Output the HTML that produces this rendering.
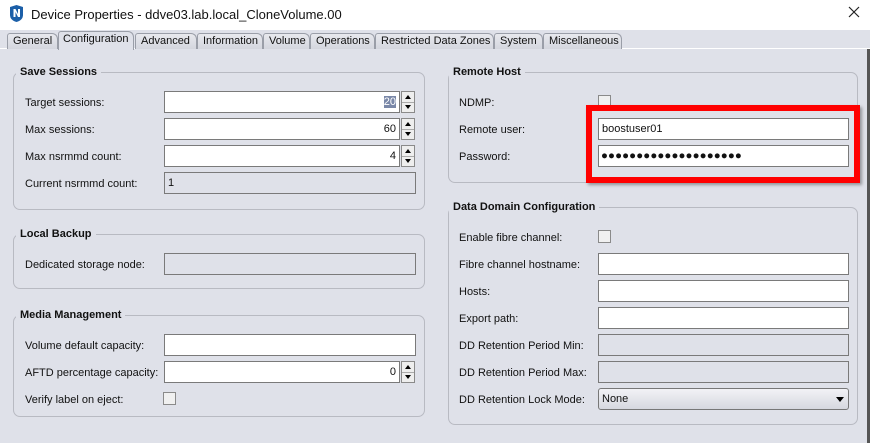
<!DOCTYPE html>
<html><head><style>
*{box-sizing:border-box;margin:0;padding:0}
body{width:870px;height:443px;overflow:hidden;background:#dfe1e9;font-family:"Liberation Sans",sans-serif;font-size:11px;color:#111;position:relative}
.a{position:absolute;white-space:nowrap}
.title{left:0;top:0;width:870px;height:30px;background:#fff}
.tabs{left:0;top:30px;width:870px;height:19px;background:#dfe1e9;border-bottom:1px solid #fff}
.tab{position:absolute;top:3px;height:16px;border:1px solid #9a9ea8;border-bottom:none;border-radius:3px 6px 0 0;background:linear-gradient(#e8e9ee,#d4d6de);font-size:11px;line-height:15px;padding-left:5px;color:#111;white-space:nowrap;overflow:hidden}
.tab.sel{top:1px;height:19px;background:#dfe1e9;border-bottom:none;z-index:2}
.grp{border:1px solid #b8bac2;border-radius:7px}
.gl{background:#dfe1e9;font-weight:bold;font-size:11px;padding:0 4px;line-height:14px}
.lbl{font-size:11px;line-height:14px}
.f{background:#fff;border:1px solid #7a7a7a;height:22px;font-size:11px;line-height:21px;padding:0 3px}
.g{background:#dfe1e9;border:1px solid #7a7a7a;height:22px;font-size:11px;line-height:21px;padding:0 3px}
.sp{width:14px;height:22px;border:1px solid #8a8a8a;background:#eee}
.sp:before{content:"";position:absolute;left:3px;top:3px;border:3.5px solid transparent;border-bottom:4px solid #000;border-top:none}
.sp:after{content:"";position:absolute;left:3px;bottom:3px;border:3.5px solid transparent;border-top:4px solid #000;border-bottom:none}
.sp i{position:absolute;left:0;top:10px;width:12px;border-top:1px solid #aaa}
.cb{width:13px;height:13px;border:1px solid #8a8a8a;background:#f0f0f0}
</style></head><body>
<div class="a title"></div>
<svg class="a" style="left:9px;top:5px" width="15" height="17" viewBox="0 0 15 17"><path d="M1 2 L7.5 0 L14 2 L14 10 Q14 15 7.5 17 Q1 15 1 10Z" fill="#1c5fa8"/><path d="M4.5 12V4h2l2.5 5V4h2v8h-2L6.5 7v5z" fill="#fff"/></svg>
<div class="a" style="left:31px;top:7px;font-size:13px;line-height:16px">Device Properties - ddve03.lab.local_CloneVolume.00</div>
<svg class="a" style="left:848px;top:6px" width="12" height="12" viewBox="0 0 12 12"><path d="M1 1L11 11M11 1L1 11" stroke="#222" stroke-width="1.2"/></svg>
<div class="a tabs">
<div class="tab" style="left:7px;width:51px">General</div>
<div class="tab sel" style="left:58px;width:76px;padding-left:4px">Configuration</div>
<div class="tab" style="left:135px;width:62px">Advanced</div>
<div class="tab" style="left:197px;width:66px">Information</div>
<div class="tab" style="left:263px;width:47px">Volume</div>
<div class="tab" style="left:310px;width:65px">Operations</div>
<div class="tab" style="left:375px;width:119px">Restricted Data Zones</div>
<div class="tab" style="left:494px;width:49px">System</div>
<div class="tab" style="left:543px;width:79px">Miscellaneous</div>
</div>
<div class="a" style="left:867px;top:49px;width:3px;height:394px;background:#555"></div>

<div class="a grp" style="left:13px;top:72px;width:412px;height:138px"></div>
<div class="a gl" style="left:16px;top:65px">Save Sessions</div>
<div class="a lbl" style="left:25px;top:96px">Target sessions:</div>
<div class="a f" style="left:164px;top:91px;width:236px;text-align:right"><span style="background:#7a88a8;color:#fff">20</span></div>
<div class="a sp" style="left:401px;top:91px"><i></i></div>
<div class="a lbl" style="left:25px;top:123px">Max sessions:</div>
<div class="a f" style="left:164px;top:118px;width:236px;text-align:right">60</div>
<div class="a sp" style="left:401px;top:118px"><i></i></div>
<div class="a lbl" style="left:25px;top:150px">Max nsrmmd count:</div>
<div class="a f" style="left:164px;top:145px;width:236px;text-align:right">4</div>
<div class="a sp" style="left:401px;top:145px"><i></i></div>
<div class="a lbl" style="left:25px;top:177px">Current nsrmmd count:</div>
<div class="a g" style="left:164px;top:172px;width:252px">1</div>

<div class="a grp" style="left:13px;top:234px;width:412px;height:55px"></div>
<div class="a gl" style="left:16px;top:227px">Local Backup</div>
<div class="a lbl" style="left:25px;top:258px">Dedicated storage node:</div>
<div class="a g" style="left:164px;top:253px;width:252px"></div>

<div class="a grp" style="left:13px;top:315px;width:412px;height:102px"></div>
<div class="a gl" style="left:16px;top:308px">Media Management</div>
<div class="a lbl" style="left:25px;top:339px">Volume default capacity:</div>
<div class="a f" style="left:164px;top:334px;width:252px"></div>
<div class="a lbl" style="left:25px;top:366px">AFTD percentage capacity:</div>
<div class="a f" style="left:164px;top:361px;width:236px;text-align:right">0</div>
<div class="a sp" style="left:401px;top:361px"><i></i></div>
<div class="a lbl" style="left:25px;top:393px">Verify label on eject:</div>
<div class="a cb" style="left:163px;top:392px"></div>

<div class="a grp" style="left:448px;top:72px;width:410px;height:111px"></div>
<div class="a gl" style="left:449px;top:65px">Remote Host</div>
<div class="a lbl" style="left:459px;top:96px">NDMP:</div>
<div class="a cb" style="left:598px;top:95px"></div>
<div class="a lbl" style="left:459px;top:123px">Remote user:</div>
<div class="a f" style="left:598px;top:118px;width:251px">boostuser01</div>
<div class="a lbl" style="left:459px;top:150px">Password:</div>
<div class="a f" style="left:598px;top:145px;width:251px;font-size:11.5px;letter-spacing:0.1px;padding-left:2px">●●●●●●●●●●●●●●●●●●●●</div>
<div class="a" style="left:586px;top:105px;width:274px;height:78px;border:6px solid #f00;box-shadow:2px 2px 3px rgba(0,0,0,.35)"></div>

<div class="a grp" style="left:448px;top:207px;width:410px;height:218px"></div>
<div class="a gl" style="left:449px;top:200px">Data Domain Configuration</div>
<div class="a lbl" style="left:459px;top:231px">Enable fibre channel:</div>
<div class="a cb" style="left:598px;top:230px"></div>
<div class="a lbl" style="left:459px;top:258px">Fibre channel hostname:</div>
<div class="a f" style="left:598px;top:253px;width:251px"></div>
<div class="a lbl" style="left:459px;top:285px">Hosts:</div>
<div class="a f" style="left:598px;top:280px;width:251px"></div>
<div class="a lbl" style="left:459px;top:312px">Export path:</div>
<div class="a f" style="left:598px;top:307px;width:251px"></div>
<div class="a lbl" style="left:459px;top:339px">DD Retention Period Min:</div>
<div class="a g" style="left:598px;top:334px;width:251px"></div>
<div class="a lbl" style="left:459px;top:366px">DD Retention Period Max:</div>
<div class="a g" style="left:598px;top:361px;width:251px"></div>
<div class="a lbl" style="left:459px;top:393px">DD Retention Lock Mode:</div>
<div class="a" style="left:598px;top:388px;width:251px;height:22px;border:1px solid #777;border-radius:3px;background:linear-gradient(#f2f2f6,#d6d8df);font-size:11px;line-height:21px;padding-left:3px">None<span style="position:absolute;right:4px;top:8px;border:4px solid transparent;border-top:5px solid #000;border-bottom:none"></span></div>
</body></html>
